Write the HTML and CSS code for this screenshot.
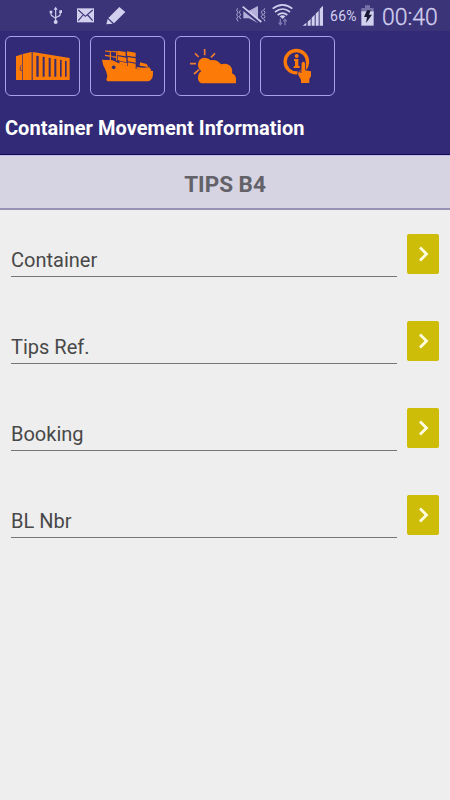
FILE: index.html
```html
<!DOCTYPE html>
<html lang="en">
<head>
<meta charset="utf-8">
<title>Container Movement Information</title>
<link rel="stylesheet" href="styles.css">
</head>
<body>
<div class="status">
  <svg class="usb" viewBox="144 0 45 93"><path d="M167 26V64M153 35V43Q153 48 160 50L167 56M181 34V41Q181 47 175 49L167 53" fill="none" stroke="#d2d0ee" stroke-width="3.5"/><path d="M167 20l6 9h-12zM149 32h8v8h-8zM178 31h8v8h-8z" fill="#d2d0ee"/><circle cx="167" cy="66" r="6" fill="#d2d0ee"/></svg>
  <svg class="mail" viewBox="228 0 57 93"><path d="M231 25h51v42h-51z" fill="#d2d0ee"/><path d="M235 30L256 49L278 30M235 62L249 45M278 62L263 45" fill="none" stroke="#3c3479" stroke-width="3.5"/></svg>
  <svg class="pencil" viewBox="315 0 63 93"><path d="M358 21L376 36L342 70L325 54ZM323 57L338 71L319 73Z" fill="#d2d0ee"/></svg>
  <svg class="mute" viewBox="33 0 90 93"><path d="M55 32H72L99 18V69L72 55H55Z" fill="#b6b1da"/><path d="M51 25L108 71" stroke="#3c3479" stroke-width="8"/><path d="M53 20L109 66" stroke="#d2d0ee" stroke-width="5"/><path d="M38 25l-3 6 4 6-4 7 4 6-4 6 4 8M46 31l-3 6 4 7-4 6 4 7M112 31l-3 6 4 7-4 6 4 7M119 25l-3 6 4 6-4 7 4 6-4 6 4 8" fill="none" stroke="#c5c0e4" stroke-width="2.5"/></svg>
  <svg class="wifi" viewBox="141 0 63 93"><path d="M143 26Q173 3 202 26M150 36Q173 18 195 36M158 45Q173 34 187 45" fill="none" stroke="#d2d0ee" stroke-width="5"/><path d="M164 49Q173 43 181 49L173 57Z" fill="#d2d0ee"/><path d="M166 56V73M161 68l5 6 5-6M180 76V58M175 64l5-6 5 6" fill="none" stroke="#8079b2" stroke-width="4"/></svg>
  <svg class="signal" viewBox="231 0 66 93"><path d="M233 77l11-9v9zM248 65l9-8v20h-9zM260 53l9-9v33h-9zM272 41l9-9v45h-9zM284 27l10-10v60h-10z" fill="#d2d0ee"/></svg>
  <span class="percent">66%</span>
  <svg class="battery" viewBox="408 0 39 93"><path d="M420 16h15v8h11v20h-37V24h11z" fill="#7871a8"/><path d="M409 34h37v43h-37z" fill="#d2d0ee"/><path d="M426 31h11l-5 13h9l-18 25 3-18h-9z" fill="#171833"/></svg>
  <span class="clock">00:40</span>
</div>
<header class="header">
  <nav class="nav">
    <a class="tile"><svg viewBox="15 18 225 180"><path d="M48 79L66 73V150H48ZM68 72L95 66V150H68ZM98 66L209 84V150H98Z" fill="#fb7a08"/><path d="M109 77l7 1v62h-7zM128 80l6 1v59h-6zM146 83l6 1v56h-6zM163 86l6 1v53h-6zM180 89l5 1v50h-5zM195 92l5 1v47h-5z" fill="#3d2d6c"/><path d="M65 106l-4 3v12h5" fill="none" stroke="#322a76" stroke-width="2"/></svg></a>
    <a class="tile"><svg viewBox="15 18 225 180"><path d="M51 89L82 91L105 101L158 118L204 123Q205 141 199 148Q196 154 188 154H67L64 149L67 138Q65 126 60 116Q53 105 51 89Z" fill="#fb7a08"/><path d="M97 62l25 4v13l-25-4zM99 79l25 4v14l-25-6zM126 64l26 4v13l-26-4zM128 81l24 4v13l-24-4zM128 97l24 4v16l-24-7zM103 94l23 5v10l-23-8zM155 111q18 4 38 1l5 7-2 6-41-7zM165 97l20 5 5 9-26-4z" fill="#fb7a08"/><path d="M60 63l20 2M60 76l20 3M76 64v27M82 64l14 2M82 80l14 2M95 64v28" fill="none" stroke="#fb7a08" stroke-width="3.5"/><circle cx="86" cy="112" r="5.5" fill="#322a76"/></svg></a>
    <a class="tile"><svg viewBox="15 18 225 180"><path d="M104 57V76M75 70L86 81M135 70L123 82M60 101H78M72 132L87 119" stroke="#ee7d32" stroke-width="5" fill="none"/><path d="M94 160Q84 156 84 143Q84 130 94 123Q83 116 84 102Q86 86 101 83Q115 82 122 91Q139 86 153 103Q166 99 177 105Q189 113 186 130Q198 135 198 148V160Z" fill="#fb7a08"/></svg></a>
    <a class="tile"><svg viewBox="15 18 225 180"><circle cx="124" cy="95" r="33.5" fill="none" stroke="#fb7a08" stroke-width="10"/><path d="M117 87h13v21h4v6h-18v-6h4V93h-3z" fill="#fb7a08"/><circle cx="125" cy="78" r="6" fill="#fb7a08"/><path d="M140 99Q145 92 150 99V121L168 124V139L163 147V159H138V149L130 136V125L139 129Z" fill="#fb7a08" stroke="#322a76" stroke-width="5" paint-order="stroke"/></svg></a>
  </nav>
  <h1 class="title">Container Movement Information</h1>
</header>
<h2 class="band">TIPS B4</h2>
<main class="form">
  <div class="row"><div class="field">Container</div><button class="go" aria-label="Go"><svg viewBox="0 0 32 40"><path d="M13 13.5l6.5 6.5-6.5 6.5"/></svg></button></div>
  <div class="row"><div class="field">Tips Ref.</div><button class="go" aria-label="Go"><svg viewBox="0 0 32 40"><path d="M13 13.5l6.5 6.5-6.5 6.5"/></svg></button></div>
  <div class="row"><div class="field">Booking</div><button class="go" aria-label="Go"><svg viewBox="0 0 32 40"><path d="M13 13.5l6.5 6.5-6.5 6.5"/></svg></button></div>
  <div class="row"><div class="field">BL Nbr</div><button class="go" aria-label="Go"><svg viewBox="0 0 32 40"><path d="M13 13.5l6.5 6.5-6.5 6.5"/></svg></button></div>
</main>
</body>
</html>
```
FILE: styles.css
```css
* { box-sizing: border-box; }
body { margin: 0; width: 450px; height: 800px; overflow: hidden; background: #eeeeee; font-family: Roboto, sans-serif; }
svg { display: block; flex: none; }
.status { display: flex; height: 31px; padding-left: 48px; background: #3c3479; color: #d2d0ee; }
.status svg { height: 31px; }
.usb { width: 15px; }
.mail { width: 19px; margin-left: 13px; }
.pencil { width: 21px; margin-left: 10px; }
.mute { width: 30px; margin-left: 110px; }
.wifi { width: 21px; margin-left: 6px; }
.signal { width: 22px; margin-left: 9px; }
.percent { width: 31px; margin-left: 6px; font-size: 14px; line-height: 33px; letter-spacing: 0.3px; }
.battery { width: 13px; }
.clock { margin-left: 8px; font-size: 23px; line-height: 35px; font-weight: 300; white-space: nowrap; -webkit-text-stroke: 0.3px #d2d0ee; }
.header { height: 124px; padding: 5px; background: #322a76; border-bottom: 1px solid #120a55; }
.nav { display: flex; gap: 10px; }
.tile { width: 75px; height: 60px; border: 1px solid #aaa2e8; border-radius: 6px; }
.tile svg { width: 75px; height: 60px; margin: -1px; }
.title { margin: 20px 0 0; color: #fff; font-size: 20px; line-height: 24px; font-weight: 700; letter-spacing: 0.03px; white-space: nowrap; }
.band { margin: 0; height: 55px; border-top: 1px solid #c0bcec; border-bottom: 2px solid #9692b4; background: #d6d4e2; color: #626268; font-size: 22.5px; line-height: 57px; font-weight: 700; text-align: center; }
.form { display: flex; flex-direction: column; gap: 44px; padding: 24px 11px 0; }
.row { display: flex; gap: 10px; height: 43px; }
.field { width: 386px; height: 43px; padding-top: 14px; border-bottom: 1px solid #777; color: #484848; font-size: 20px; line-height: 24px; }
.go { width: 32px; height: 40px; padding: 0; border: 0; border-radius: 2px; background: #cdbd08; }
.go svg { width: 32px; height: 40px; }
.go path { fill: none; stroke: #fffde0; stroke-width: 2.8; }
```
